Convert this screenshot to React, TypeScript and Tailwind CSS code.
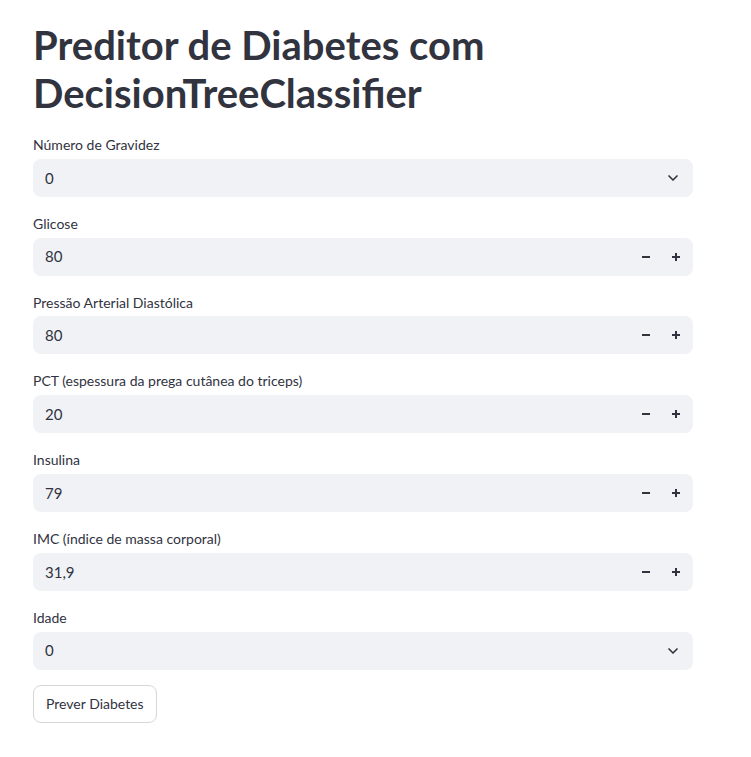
import { ChevronDown } from "lucide-react";

const font = { fontFamily: '"Lato", "Liberation Sans", sans-serif' };

type Field = { label: string; value: string; kind: "select" | "number" };

const fields: Field[] = [
  { label: "Número de Gravidez", value: "0", kind: "select" },
  { label: "Glicose", value: "80", kind: "number" },
  { label: "Pressão Arterial Diastólica", value: "80", kind: "number" },
  { label: "PCT (espessura da prega cutânea do triceps)", value: "20", kind: "number" },
  { label: "Insulina", value: "79", kind: "number" },
  { label: "IMC (índice de massa corporal)", value: "31,9", kind: "number" },
  { label: "Idade", value: "0", kind: "select" },
];

function Minus() {
  return (
    <svg width="8" height="8" viewBox="0 0 8 8">
      <rect x="0" y="3" width="8" height="2" fill="#31333f" />
    </svg>
  );
}

function Plus() {
  return (
    <svg width="8" height="8" viewBox="0 0 8 8">
      <rect x="0" y="3" width="8" height="2" fill="#31333f" />
      <rect x="3" y="0" width="2" height="8" fill="#31333f" />
    </svg>
  );
}

function Input({ f }: { f: Field }) {
  return (
    <div className="flex flex-col">
      <label className="h-[24.8px] text-[14px] leading-[22px] text-[#31333f]">{f.label}</label>
      <div className="flex h-[38px] items-center rounded-lg bg-[#f0f2f6] pl-3 pr-3">
        <span className="flex-1 text-[15px] text-[#31333f]">{f.value}</span>
        {f.kind === "select" ? (
          <ChevronDown className="h-4 w-4 text-[#31333f]" strokeWidth={2.5} />
        ) : (
          <div className="flex items-center">
            <Minus />
            <span className="ml-[22px] mr-[1px] flex"><Plus /></span>
          </div>
        )}
      </div>
    </div>
  );
}

export default function App() {
  return (
    <div className="min-h-screen bg-white" style={font}>
      <div className="ml-[33px] w-[660px] pt-[21px]">
        <h1 className="text-[40px] font-bold leading-[48px] text-[#31333f]">
          Preditor de Diabetes com DecisionTreeClassifier
        </h1>
        <div className="mt-[17px] flex flex-col gap-4">
          {fields.map((f) => (
            <Input key={f.label} f={f} />
          ))}
          <div className="-mt-px flex">
            <button className="h-[38px] rounded-lg border border-[#d6d6d9] bg-white px-3 text-[14px] text-[#31333f]">
              Prever Diabetes
            </button>
          </div>
        </div>
      </div>
    </div>
  );
}
